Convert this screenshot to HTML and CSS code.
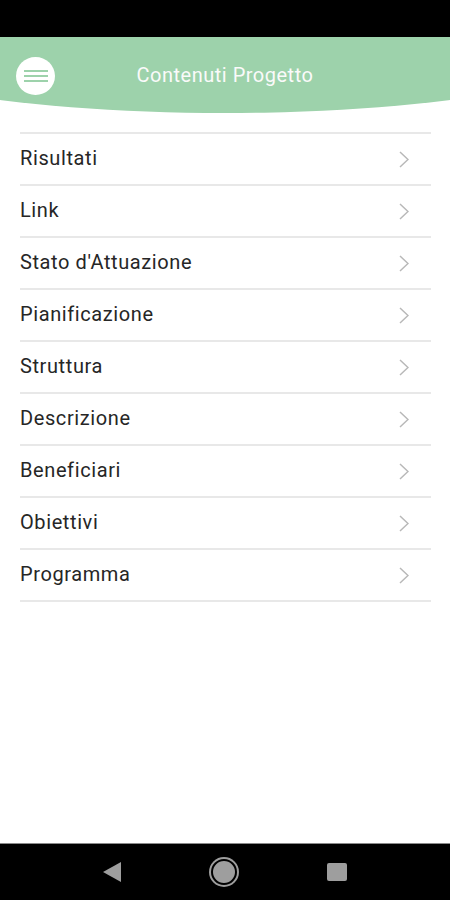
FILE: index.html
```html
<!DOCTYPE html>
<html lang="it">
<head>
  <meta charset="UTF-8" />
  <meta name="viewport" content="width=device-width, initial-scale=1.0" />
  <title>Contenuti Progetto</title>
  <link rel="stylesheet" href="styles.css">
</head>
<body>
  <div class="statusbar"></div>

  <header class="topbar">
    <button class="menu-btn" aria-label="Menu">
      <span></span><span></span><span></span>
    </button>
    <h1>Contenuti Progetto</h1>
    <div class="spacer"></div>
  </header>

  <ul class="menu-list">
    <li>Risultati <svg class="chevron" viewBox="0 0 10 17"><polyline points="1,1 9,8.5 1,16" /></svg></li>
    <li>Link <svg class="chevron" viewBox="0 0 10 17"><polyline points="1,1 9,8.5 1,16" /></svg></li>
    <li>Stato d'Attuazione <svg class="chevron" viewBox="0 0 10 17"><polyline points="1,1 9,8.5 1,16" /></svg></li>
    <li>Pianificazione <svg class="chevron" viewBox="0 0 10 17"><polyline points="1,1 9,8.5 1,16" /></svg></li>
    <li>Struttura <svg class="chevron" viewBox="0 0 10 17"><polyline points="1,1 9,8.5 1,16" /></svg></li>
    <li>Descrizione <svg class="chevron" viewBox="0 0 10 17"><polyline points="1,1 9,8.5 1,16" /></svg></li>
    <li>Beneficiari <svg class="chevron" viewBox="0 0 10 17"><polyline points="1,1 9,8.5 1,16" /></svg></li>
    <li>Obiettivi <svg class="chevron" viewBox="0 0 10 17"><polyline points="1,1 9,8.5 1,16" /></svg></li>
    <li>Programma <svg class="chevron" viewBox="0 0 10 17"><polyline points="1,1 9,8.5 1,16" /></svg></li>
  </ul>

  <nav class="navbar">
    <span class="nav-back"></span>
    <span class="nav-home"></span>
    <span class="nav-recent"></span>
  </nav>
</body>
</html>
```

FILE: styles.css
```css
html, body {
  height: 100%;
}

body {
  font-family: Roboto, "Noto Sans", Arial, sans-serif;
  margin: 0;
  background: #fff;
  display: flex;
  flex-direction: column;
  height: 900px;
  overflow: hidden;
}

.statusbar {
  height: 37px;
  background: #000;
  flex-shrink: 0;
}

.topbar {
  height: 76px;
  box-sizing: border-box;
  background: #9dd2ab;
  clip-path: ellipse(402px 76px at 50% 0);
  display: flex;
  align-items: flex-start;
  padding: 20px 16px 0;
  flex-shrink: 0;
}

.menu-btn {
  width: 39px;
  height: 38px;
  border-radius: 50%;
  background: #fff;
  border: none;
  padding: 0;
  display: flex;
  flex-direction: column;
  align-items: center;
  justify-content: center;
  gap: 3px;
}

.menu-btn span {
  display: block;
  width: 24px;
  height: 2px;
  background: #9dd2ab;
}

.topbar h1 {
  flex: 1;
  margin: 0;
  line-height: 36px;
  text-align: center;
  color: #fafafa;
  font-size: 20px;
  letter-spacing: 0.5px;
  font-weight: normal;
}

.spacer {
  width: 39px;
}

.menu-list {
  list-style: none;
  margin: 19px 19px 0 20px;
  padding: 0;
  border-bottom: 2px solid #e8e8e8;
}

.menu-list li {
  height: 50px;
  border-top: 2px solid #e8e8e8;
  display: flex;
  align-items: center;
  justify-content: space-between;
  font-size: 20px;
  letter-spacing: 0.6px;
  color: #262626;
  padding-bottom: 3px;
  box-sizing: border-box;
  height: 52px;
}

.chevron {
  width: 10px;
  height: 17px;
  margin: 3px 22px 0 0;
  fill: none;
  stroke: #b8b8b8;
  stroke-width: 1.5;
}

.navbar {
  margin-top: auto;
  height: 56px;
  background: #000;
  border-top: 1px solid #8a8a8a;
  display: flex;
  align-items: center;
  justify-content: center;
  gap: 90px;
  flex-shrink: 0;
}

.nav-back {
  width: 0;
  height: 0;
  border-top: 10px solid transparent;
  border-bottom: 10px solid transparent;
  border-right: 18px solid #9e9e9e;
}

.nav-home {
  width: 22px;
  height: 22px;
  border-radius: 50%;
  background: #9e9e9e;
  border: 2px solid #000;
  box-shadow: 0 0 0 2px #9e9e9e;
}

.nav-recent {
  width: 20px;
  height: 18px;
  border-radius: 2px;
  background: #9e9e9e;
}
```
